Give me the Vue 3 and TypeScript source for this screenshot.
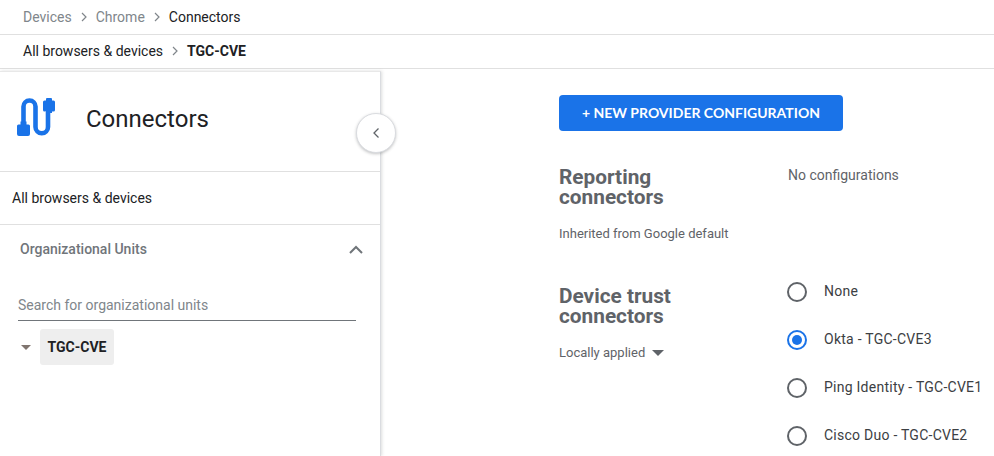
<script setup lang="ts">
const radios = [
  { label: 'None', on: false },
  { label: 'Okta - TGC-CVE3', on: true },
  { label: 'Ping Identity - TGC-CVE1', on: false },
  { label: 'Cisco Duo - TGC-CVE2', on: false },
]
</script>

<template>
  <div class="page">
    <div class="crumbs top">
      <span class="muted">Devices</span>
      <svg class="sep" width="8" height="10" viewBox="0 0 8 10"><path d="M2 1l4 4-4 4" fill="none" stroke="#80868b" stroke-width="1.2" /></svg>
      <span class="muted">Chrome</span>
      <svg class="sep" width="8" height="10" viewBox="0 0 8 10"><path d="M2 1l4 4-4 4" fill="none" stroke="#80868b" stroke-width="1.2" /></svg>
      <span class="dark">Connectors</span>
    </div>
    <div class="crumbs second">
      <span class="dark">All browsers &amp; devices</span>
      <svg class="sep" width="8" height="10" viewBox="0 0 8 10"><path d="M2 1l4 4-4 4" fill="none" stroke="#80868b" stroke-width="1.2" /></svg>
      <b class="dark">TGC-CVE</b>
    </div>
    <div class="body">
      <aside class="side">
        <div class="side-head">
          <svg class="logo" width="40" height="40" viewBox="0 0 40 40">
            <path d="M8.500 24V8.500a6 6 0 0 1 12 0V29a6.250 6.250 0 0 0 12.500 0V14" fill="none" stroke="#1a73e8" stroke-width="4.600" />
            <path d="M5.500 23.500h6v3h2a1.500 1.500 0 0 1 1.500 1.500v8a2 2 0 0 1-2 2H4a2 2 0 0 1-2-2v-8a1.500 1.500 0 0 1 1.500-1.500h2z" fill="#1a73e8" />
            <path d="M32 0h4a1 1 0 0 1 1 1v1.500h1.500A1.500 1.500 0 0 1 40 4v8a1.500 1.500 0 0 1-1.500 1.500H37V15h-6v-1.500h-1.500A1.500 1.500 0 0 1 28 12V4a1.500 1.500 0 0 1 1.500-1.500H31V1a1 1 0 0 1 1-1z" fill="#1a73e8" />
          </svg>
          <h1>Connectors</h1>
        </div>
        <div class="all-row">All browsers &amp; devices</div>
        <div class="ou-head">
          <span>Organizational Units</span>
          <svg width="14" height="9" viewBox="0 0 14 9"><path d="M1 8l6-6 6 6" fill="none" stroke="#70757a" stroke-width="2" /></svg>
        </div>
        <div class="search">Search for organizational units</div>
        <div class="tree">
          <span class="tri"></span>
          <span class="chip">TGC-CVE</span>
        </div>
        <button class="collapse" aria-label="Collapse">
          <svg width="8" height="12" viewBox="0 0 8 12"><path d="M6.500 1.500L2 6l4.500 4.500" fill="none" stroke="#5f6368" stroke-width="1.300" /></svg>
        </button>
      </aside>
      <main class="main">
        <button class="primary">+ NEW PROVIDER CONFIGURATION</button>
        <section class="sec reporting">
          <div class="left">
            <h2>Reporting<br />connectors</h2>
            <p class="note">Inherited from Google default</p>
          </div>
          <div class="right none-text">No configurations</div>
        </section>
        <section class="sec trust">
          <div class="left">
            <h2>Device trust<br />connectors</h2>
            <p class="note applied">Locally applied <span class="tri small"></span></p>
          </div>
          <div class="right radios">
            <label v-for="r in radios" :key="r.label" class="radio">
              <span class="dot" :class="{ on: r.on }"></span>
              <span class="lab">{{ r.label }}</span>
            </label>
          </div>
        </section>
      </main>
    </div>
  </div>
</template>

<style>
html, body { margin: 0; background: #fff; overflow: hidden; }
</style>

<style scoped>
.page {
  width: 994px;
  height: 456px;
  overflow: hidden;
  font-family: Roboto, "Liberation Sans", sans-serif;
  background: #fff;
  display: flex;
  flex-direction: column;
}
.crumbs {
  display: flex;
  align-items: center;
  padding-left: 23px;
  font-size: 14px;
  box-sizing: border-box;
  border-bottom: 1px solid #e0e0e0;
  flex: none;
}
.top { height: 35px; }
.second { height: 34px; padding-bottom: 2px; }
.muted { color: #80868b; }
.dark { color: #202124; }
.sep { margin: 0 8px; }
.second b { font-weight: 700; }
.body { display: flex; flex: 1; padding-top: 2px; min-height: 0; }
.side {
  position: relative;
  width: 381px;
  box-sizing: border-box;
  flex: none;
  border-right: 1px solid #dadce0;
  border-top: 1px solid #e8e8e8;
  box-shadow: 1px 0 3px rgba(60, 64, 67, .18);
}
.side-head {
  height: 100px;
  box-sizing: border-box;
  border-bottom: 1px solid #e0e0e0;
  display: flex;
  align-items: center;
  padding: 0 0 6px 15px;
}
.logo { flex: none; margin-top: -1px; overflow: visible; }
.side-head h1 {
  margin: 0 0 0 31px;
  font-size: 24px;
  font-weight: 400;
  color: #202124;
}
.all-row {
  height: 53px;
  box-sizing: border-box;
  border-bottom: 1px solid #e0e0e0;
  padding-left: 12px;
  display: flex;
  align-items: center;
  font-size: 14px;
  color: #202124;
}
.ou-head {
  display: flex;
  justify-content: space-between;
  align-items: center;
  height: 48px;
  padding: 0 17px 0 20px;
  font-size: 14px;
  font-weight: 500;
  color: #70757a;
}
.search {
  margin: 20px 24px 0 18px;
  height: 27px;
  border-bottom: 1px solid #70757a;
  font-size: 14px;
  line-height: 25px;
  color: #80868b;
}
.tree { display: flex; align-items: center; margin: 8px 0 0 21px; }
.tri {
  width: 0;
  height: 0;
  border-left: 5px solid transparent;
  border-right: 5px solid transparent;
  border-top: 5px solid #80756f;
  display: inline-block;
}
.chip {
  margin-left: 9px;
  width: 74px;
  height: 36px;
  box-sizing: border-box;
  background: #eeeeee;
  border-radius: 3px;
  display: flex;
  align-items: center;
  justify-content: center;
  font-size: 14px;
  font-weight: 700;
  color: #202124;
}
.collapse {
  position: absolute;
  left: 356px;
  top: 41px;
  width: 40px;
  height: 40px;
  border-radius: 50%;
  background: #fff;
  border: 1px solid #dadce0;
  box-shadow: 0 1px 3px rgba(60, 64, 67, .3);
  padding: 0;
  display: flex;
  align-items: center;
  justify-content: center;
}
.main { padding: 24px 0 0 178px; flex: 1; min-width: 0; }
.primary {
  display: block;
  width: 284px;
  height: 36px;
  background: #1a73e8;
  color: #fff;
  border: 0;
  border-radius: 4px;
  font-family: Lato, Roboto, sans-serif;
  font-size: 14px;
  font-weight: 700;
  padding: 0 0 2px;
}
.sec { display: flex; }
.left { width: 229px; flex: none; }
.right { flex: 1; }
.reporting { margin-top: 36px; }
.trust { margin-top: 43px; }
h2 {
  margin: 0;
  font-size: 20.800px;
  line-height: 20px;
  font-weight: 700;
  color: #5f6368;
}
.note {
  margin: 18px 0 0;
  font-size: 13px;
  line-height: 18px;
  color: #5f6368;
}
.applied { margin-top: 18px; display: flex; align-items: center; }
.tri.small { margin-left: 7px; border-left-width: 6.500px; border-right-width: 6.500px; border-top-width: 6px; border-top-color: #5f6368; }
.none-text { font-size: 14px; line-height: 16px; color: #5f6368; }
.radios { margin-top: -18px; display: flex; flex-direction: column; }
.radio { height: 48px; display: flex; align-items: center; font-size: 14px; letter-spacing: .25px; color: #3c4043; white-space: nowrap; }
.dot {
  width: 20px;
  height: 20px;
  box-sizing: border-box;
  border: 2px solid #5f6368;
  border-radius: 50%;
  flex: none;
  position: relative;
  margin-left: -1px;
}
.dot.on { border-color: #1a73e8; }
.dot.on::after {
  content: "";
  position: absolute;
  inset: 3px;
  background: #1a73e8;
  border-radius: 50%;
}
.lab { margin-left: 17px; margin-top: -2px; }
</style>
